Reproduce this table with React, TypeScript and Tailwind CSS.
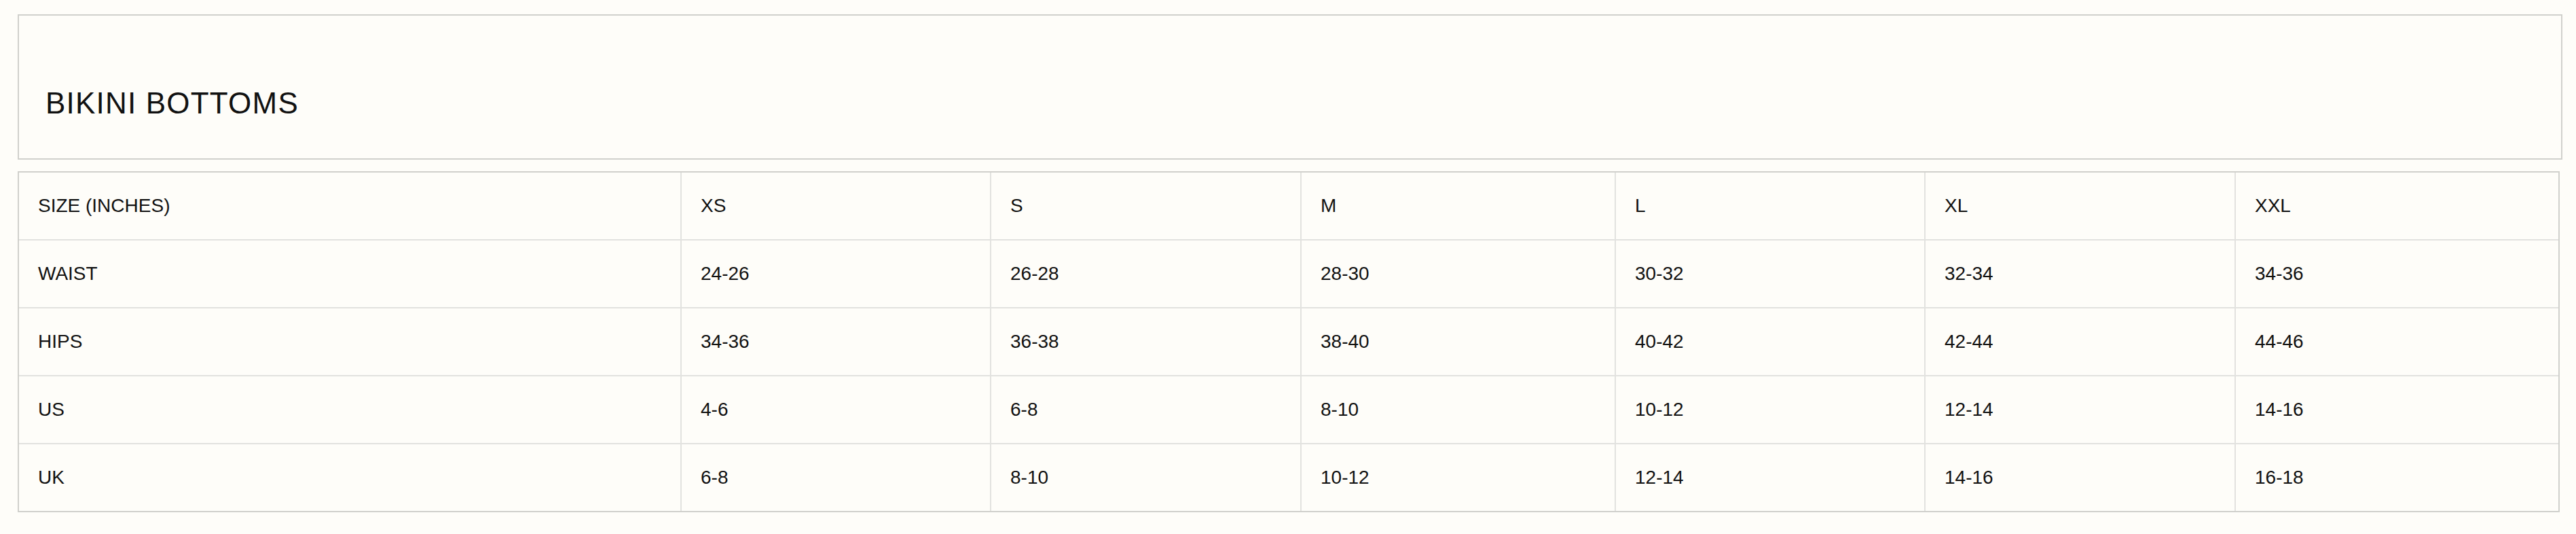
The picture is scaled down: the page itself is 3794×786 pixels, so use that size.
import React from "react";

const sizes = ["XS", "S", "M", "L", "XL", "XXL"];

const rows: { label: string; values: string[] }[] = [
  { label: "WAIST", values: ["24-26", "26-28", "28-30", "30-32", "32-34", "34-36"] },
  { label: "HIPS", values: ["34-36", "36-38", "38-40", "40-42", "42-44", "44-46"] },
  { label: "US", values: ["4-6", "6-8", "8-10", "10-12", "12-14", "14-16"] },
  { label: "UK", values: ["6-8", "8-10", "10-12", "12-14", "14-16", "16-18"] },
];

const gridCols =
  "grid grid-cols-[974px_456px_457px_463px_456px_457px_477px]";

function Row({ cells, first }: { cells: string[]; first?: boolean }) {
  return (
    <div
      className={`${gridCols} h-[98px] ${
        first ? "" : "border-t-2 border-[#e2e2df] h-[100px]"
      }`}
    >
      {cells.map((c, i) => (
        <div
          key={i}
          className={`flex items-center pl-[28px] ${
            i > 0 ? "border-l-2 border-[#e2e2df]" : ""
          }`}
        >
          {c}
        </div>
      ))}
    </div>
  );
}

export default function App() {
  return (
    <div
      className="min-h-screen w-full bg-[#fefdf9] pt-[21px] pl-[26px] text-[#111]"
      style={{ fontFamily: '"Liberation Sans", Arial, sans-serif' }}
    >
      <div className="w-[3748px] h-[214px] border-2 border-[#d0d0cc] pl-[39px] pt-[104px]">
        <h2 className="text-[44px] leading-[50px] font-normal tracking-[1.2px]">
          BIKINI BOTTOMS
        </h2>
      </div>

      <div className="mt-[17px] w-[3744px] border-2 border-[#d0d0cc] text-[28px] leading-[32px]">
        <Row cells={["SIZE (INCHES)", ...sizes]} first />
        {rows.map((r) => (
          <Row key={r.label} cells={[r.label, ...r.values]} />
        ))}
      </div>
    </div>
  );
}
